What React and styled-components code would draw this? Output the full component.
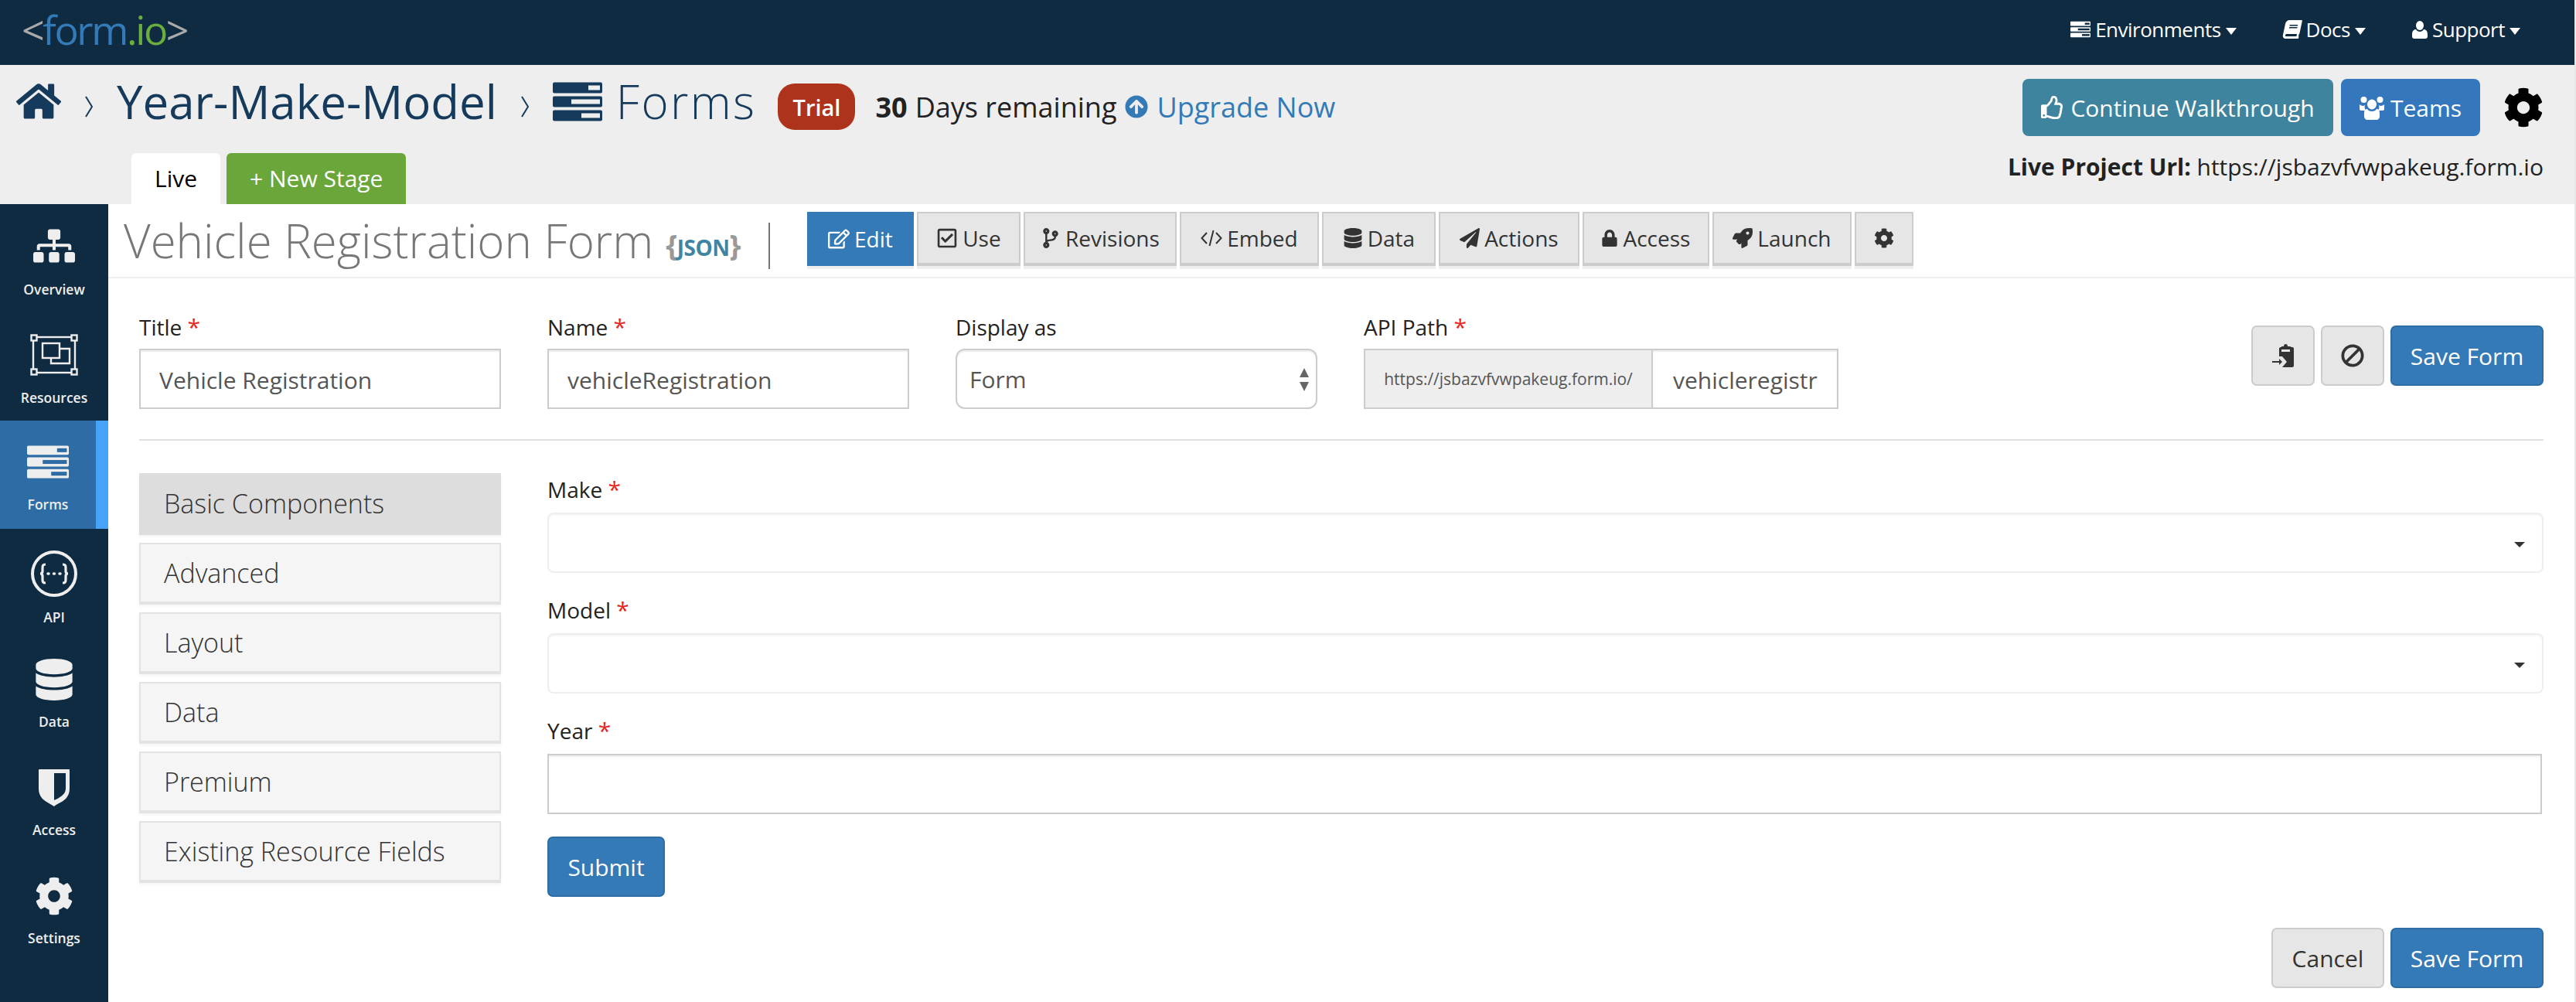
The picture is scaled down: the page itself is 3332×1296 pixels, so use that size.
import React from 'react';
import styled, { createGlobalStyle } from 'styled-components';
import {
  FaHome, FaRegThumbsUp, FaCog, FaRegEdit, FaRegCheckSquare, FaCodeBranch,
  FaDatabase, FaPaperPlane, FaLock, FaRocket, FaBook, FaBan, FaArrowCircleUp,
  FaSitemap,
} from 'react-icons/fa';

const GlobalStyle = createGlobalStyle`
  html, body { margin: 0; padding: 0; height: 100%; overflow: hidden; background: #e8e8e8; }
  body { font-family: "Open Sans", "Liberation Sans", sans-serif; font-size: 28px; color: #333; }
  * { box-sizing: border-box; }
`;

const Page = styled.div`
  width: 3330px;
  height: 1296px;
  background: #fff;
  display: flex;
  flex-direction: column;
  overflow: hidden;
`;

/* top navbar */
const TopNav = styled.nav`
  height: 84px;
  flex: none;
  background: #0f2b42;
  display: flex;
  align-items: center;
  justify-content: space-between;
  padding: 0 70px 8px 28px;
`;

const Logo = styled.div`
  font-size: 52px;
  font-weight: 400;
  line-height: 60px;
  letter-spacing: -2.4px;
  color: #aaa;
  span { color: #337ab7; }
  b { color: #6aae3d; font-weight: 400; }
`;

const NavLinks = styled.div`
  display: flex;
  gap: 60px;
`;

const NavLink = styled.a`
  display: flex;
  align-items: center;
  gap: 6px;
  color: #fff;
  font-size: 26px;
  letter-spacing: -0.5px;
  svg { flex: none; }
`;

const BookGlyph = styled(FaBook)`
  transform: skewX(-12deg);
`;

const NavCaret = styled.i`
  width: 0;
  height: 0;
  margin: 4px 0 0 0;
  border-left: 7px solid transparent;
  border-right: 7px solid transparent;
  border-top: 9px solid #fff;
`;

/* grey project header */
const Header = styled.header`
  height: 180px;
  flex: none;
  background: #eee;
  padding-right: 40px;
  display: flex;
  flex-direction: column;
`;

const HeaderTop = styled.div`
  height: 114px;
  display: flex;
  justify-content: space-between;
  padding-left: 21px;
`;

const Crumbs = styled.div`
  height: 94px;
  display: flex;
  align-items: center;
  color: #153a5b;
`;

const Crumb = styled.span`
  font-size: 60px;
  font-weight: ${(p) => (p.$light ? 300 : 400)};
  letter-spacing: ${(p) => (p.$light ? '2.4px' : '0')};
  margin-left: ${(p) => (p.$light ? '18px' : '0')};
  line-height: 70px;
`;

const CrumbSep = styled.svg`
  width: 14px;
  height: 28px;
  margin: 14px 29px 0 29px;
  fill: none;
  stroke: #153a5b;
  stroke-width: 2;
`;

const TrialBadge = styled.span`
  margin: 14px 0 0 28px;
  width: 100px;
  height: 60px;
  border-radius: 22px;
  background: #ad331d;
  color: #fff;
  font-size: 29px;
  font-weight: 600;
  display: flex;
  align-items: center;
  justify-content: center;
`;

const Remaining = styled.div`
  margin: 14px 0 0 26px;
  display: flex;
  align-items: center;
  font-size: 36px;
  color: #222;
  b { font-weight: 700; margin-right: 10px; }
`;

const Upgrade = styled.a`
  display: flex;
  align-items: center;
  gap: 11px;
  margin-left: 11px;
  color: #337ab7;
`;

const HeaderActions = styled.div`
  padding-top: 18px;
  display: flex;
  align-items: flex-start;
  gap: 10px;
`;

const HeadButton = styled.button`
  height: 74px;
  width: ${(p) => p.$w}px;
  border: 0;
  border-radius: 8px;
  background: ${(p) => p.$bg};
  color: #fff;
  font: 400 30px "Open Sans", sans-serif;
  padding: 0;
  display: flex;
  align-items: center;
  justify-content: center;
  gap: 8px;
`;

const HeadGear = styled.span`
  margin: 11px 0 0 20px;
  color: #000;
  display: flex;
`;

const HeaderBottom = styled.div`
  flex: 1;
  display: flex;
  justify-content: space-between;
  padding-left: 170px;
`;

const StageTabs = styled.div`
  display: flex;
  align-items: flex-end;
  gap: 8px;
`;

const StageTab = styled.a`
  height: 66px;
  padding: 0 30px 2px;
  border-radius: 6px 6px 0 0;
  background: ${(p) => (p.$add ? '#6aa639' : '#fff')};
  color: ${(p) => (p.$add ? '#fff' : '#000')};
  font-size: 30px;
  display: flex;
  align-items: center;
`;

const LiveUrl = styled.div`
  font-size: 30px;
  line-height: 36px;
  color: #222;
  b { font-weight: 700; }
`;

/* page body */
const Body = styled.div`
  flex: 1;
  display: flex;
  min-height: 0;
`;

const Sidebar = styled.aside`
  width: 140px;
  flex: none;
  background: #0f2b42;
  display: flex;
  flex-direction: column;
`;

const SideItem = styled.a`
  height: 140px;
  padding-top: ${(p) => p.$top || 30}px;
  background: ${(p) => (p.$active ? '#2d6ca5' : 'transparent')};
  border-right: ${(p) => (p.$active ? '16px solid #47a3f8' : '0')};
  display: flex;
  flex-direction: column;
  align-items: center;
  color: #eee;
  font-size: 17.5px;
  font-weight: 600;
  span { line-height: 24px; }
`;

const SideIcon = styled.div`
  height: ${(p) => p.$h}px;
  display: flex;
  align-items: center;
  justify-content: center;
  margin-bottom: ${(p) => p.$gap}px;
`;

const Main = styled.main`
  flex: 1;
  min-width: 0;
`;

const TitleBar = styled.div`
  height: 96px;
  border-bottom: 2px solid #eee;
  display: flex;
  padding-left: 20px;
`;

const FormTitle = styled.h1`
  margin: 4px 0 0;
  font-size: 60px;
  font-weight: 300;
  line-height: 86px;
  color: #777;
`;

const JsonTag = styled.span`
  margin: 9px 0 0 16px;
  font-size: 28px;
  font-weight: 700;
  line-height: 86px;
  color: #999;
  letter-spacing: -0.5px;
  i { font-style: normal; font-size: 38px; }
  em { font-style: normal; color: #3f84a0; }
`;

const TitleDivider = styled.i`
  width: 2px;
  height: 60px;
  margin: 24px 48px 0 36px;
  background: #777;
`;

const Toolbar = styled.div`
  padding-top: 10px;
  display: flex;
  gap: 4px;
`;

const ToolButton = styled.a`
  height: 70px;
  width: ${(p) => p.$w}px;
  border: 2px solid ${(p) => (p.$active ? '#337ab7' : '#ccc')};
  border-bottom-width: ${(p) => (p.$active ? 2 : 4)}px;
  background: ${(p) => (p.$active ? '#337ab7' : '#e6e6e6')};
  color: ${(p) => (p.$active ? '#fff' : '#333')};
  box-shadow: 0 4px 0 #eee;
  font-size: 28px;
  display: flex;
  align-items: center;
  justify-content: center;
  gap: 6px;
`;

const Content = styled.div`
  padding: 43px 40px 0;
`;

const SettingsRow = styled.div`
  display: flex;
  gap: 60px;
`;

const Field = styled.div`
  width: ${(p) => p.$w}px;
  flex: none;
`;

const Label = styled.label`
  display: block;
  height: 40px;
  line-height: 40px;
  margin-bottom: 8px;
  font-size: 28px;
  color: #222;
  i { color: #e3261c; font-style: normal; font-size: 30px; }
`;

const TextInput = styled.input`
  display: block;
  width: 100%;
  height: 78px;
  border: 2px solid #ccc;
  box-shadow: inset 0 2px 2px rgba(0, 0, 0, 0.075);
  padding: 2px 24px 0;
  font: 400 30px "Open Sans", sans-serif;
  color: #555;
  background: #fff;
  outline: none;
`;

const DisplaySelect = styled.div`
  position: relative;
  height: 78px;
  border: 2px solid #ccc;
  border-radius: 12px;
  box-shadow: inset 0 2px 2px rgba(0, 0, 0, 0.075);
  padding: 0 16px;
  display: flex;
  align-items: center;
  font-size: 30px;
  color: #555;
  svg { position: absolute; right: 8px; top: 23px; }
`;

const InputGroup = styled.div`
  display: flex;
  height: 78px;
`;

const Addon = styled.span`
  width: 374px;
  flex: none;
  background: #eee;
  border: 2px solid #ccc;
  font-size: 21px;
  color: #555;
  display: flex;
  align-items: center;
  justify-content: center;
`;

const GroupInput = styled(TextInput)`
  flex: 1;
  min-width: 0;
  border-left: 0;
  padding-left: 26px;
  padding-right: 0;
`;

const SettingsActions = styled.div`
  margin: 18px 0 0 auto;
  display: flex;
  gap: 8px;
`;

const Button = styled.button`
  height: 78px;
  width: ${(p) => p.$w}px;
  border-radius: 7px;
  border: 2px solid ${(p) => (p.$primary ? '#2e6da4' : '#ccc')};
  background: ${(p) => (p.$primary ? '#337ab7' : '#e6e6e6')};
  color: ${(p) => (p.$primary ? '#fff' : '#333')};
  font: 400 30px "Open Sans", sans-serif;
  padding: 0;
  display: flex;
  align-items: center;
  justify-content: center;
`;

const BanGlyph = styled(FaBan)`
  transform: scaleX(-1);
`;

const Rule = styled.hr`
  margin: 39px 0 42px;
  border: 0;
  height: 2px;
  background: #e0e0e0;
`;

const Builder = styled.div`
  display: flex;
  gap: 60px;
`;

const GroupList = styled.div`
  width: 468px;
  flex: none;
  display: flex;
  flex-direction: column;
  gap: 10px;
`;

const GroupItem = styled.a`
  height: 80px;
  padding: 0 30px;
  border: 2px solid ${(p) => (p.$active ? '#ddd' : '#e3e3e3')};
  border-bottom-width: 4px;
  background: ${(p) => (p.$active ? '#ddd' : '#f5f5f5')};
  box-shadow: 0 2px 4px rgba(0, 0, 0, 0.05);
  font-size: 34px;
  font-weight: 300;
  color: #333;
  display: flex;
  align-items: center;
`;

const Canvas = styled.div`
  flex: 1;
  min-width: 0;
  padding-top: 1px;
`;

const CanvasField = styled.div`
  margin-bottom: 28px;
  &:last-of-type { margin-bottom: 29px; }
`;

const CanvasLabel = styled(Label)`
  margin-bottom: 10px;
`;

const ChoiceBox = styled.div`
  position: relative;
  height: 78px;
  border: 2px solid #eee;
  border-radius: 8px;
  box-shadow: inset 0 2px 2px rgba(0, 0, 0, 0.04);
  &::after {
    content: '';
    position: absolute;
    right: 22px;
    top: 36px;
    border-left: 7px solid transparent;
    border-right: 7px solid transparent;
    border-top: 7px solid #333;
  }
`;

const YearInput = styled(TextInput)`
  width: calc(100% - 2px);
`;

const FormFooter = styled.div`
  margin-top: 40px;
  display: flex;
  justify-content: flex-end;
  gap: 8px;
`;

/* drawn icons */
function StackIcon({ w, h, color, cut }) {
  return (
    <svg width={w} height={h} viewBox="0 0 64 50">
      <rect x="0" y="0" width="64" height="14" rx="2" fill={color} />
      <rect x="0" y="18" width="64" height="14" rx="2" fill={color} />
      <rect x="0" y="36" width="64" height="14" rx="2" fill={color} />
      <rect x="46" y="4" width="15" height="6" fill={cut} />
      <rect x="24" y="22" width="37" height="6" fill={cut} />
      <rect x="37" y="40" width="24" height="6" fill={cut} />
    </svg>
  );
}

function ResourcesIcon() {
  return (
    <svg width="62" height="54" viewBox="0 0 62 54" fill="none" stroke="#eee" strokeWidth="2.4">
      <rect x="4" y="4" width="54" height="46" />
      <rect x="1.5" y="1.5" width="7" height="7" fill="#0f2b42" />
      <rect x="53.5" y="1.5" width="7" height="7" fill="#0f2b42" />
      <rect x="1.5" y="45.5" width="7" height="7" fill="#0f2b42" />
      <rect x="53.5" y="45.5" width="7" height="7" fill="#0f2b42" />
      <rect x="16" y="12" width="22" height="19" />
      <path d="M38 19h13v19H27v-7" />
    </svg>
  );
}

function ApiIcon() {
  return (
    <svg width="60" height="60" viewBox="0 0 60 60" fill="none" stroke="#eee">
      <ellipse cx="30" cy="30" rx="28" ry="28" strokeWidth="4" />
      <path
        d="M19 18c-4 0-4 2-4 5v4c0 2-1 3-3 3 2 0 3 1 3 3v4c0 3 0 5 4 5M41 18c4 0 4 2 4 5v4c0 2 1 3 3 3-2 0-3 1-3 3v4c0 3 0 5-4 5"
        strokeWidth="3.2"
      />
      <path d="M22 30h1M29.500 30h1M37 30h1" strokeWidth="3.5" strokeLinecap="round" />
    </svg>
  );
}

function ShieldIcon() {
  return (
    <svg width="40" height="48" viewBox="0 0 40 48">
      <path
        fill="#eee"
        d="M1 0h38c1 0 1 1 1 1v24c0 9-5 14-10 17-4 2-8 4-10 6-3-2-7-4-10-6C5 39 0 34 0 25V1c0-1 1-1 1-1zM20 5v35c3-1 6-3 9-5 4-3 6-6 6-10V5z"
        fillRule="evenodd"
      />
    </svg>
  );
}

function PasteIcon() {
  return (
    <svg width="28" height="30" viewBox="0 0 28 30" fill="#333">
      <path d="M12 3h3c0-2 1-3 2.500-3S20 1 20 3h3l2 1h1c1.500 0 2 1 2 2v22c0 1-1 2-2 2H13l6-7-6-7H9V6c0-1 1-2 2-2h1zm0 4v3h11V7z" fillRule="evenodd" />
      <path d="M0 22h9v-3l4 4-4 4v-3H0z" />
    </svg>
  );
}

function UpDownArrows() {
  return (
    <svg width="14" height="30" viewBox="0 0 14 30" fill="#666">
      <path d="M7 0l6 12H1zM7 30L1 18h12z" />
    </svg>
  );
}

function PersonIcon() {
  return (
    <svg width="20" height="23" viewBox="0 0 20 23" fill="#fff">
      <ellipse cx="10" cy="6" rx="5" ry="6" />
      <path d="M5 11c1 2 3 3 5 3s4-1 5-3c3 0 5 2 5 7v2c0 2-1 3-3 3H3c-2 0-3-1-3-3v-2c0-5 2-7 5-7z" />
    </svg>
  );
}

function UsersIcon() {
  return (
    <svg width="32" height="31" viewBox="0 0 32 31" fill="#fff">
      <circle cx="5.500" cy="5" r="4" />
      <circle cx="26.500" cy="5" r="4" />
      <path d="M0 11c1 1 3 2 5 2l2-1c-1 3 0 5 1 7H2c-1 0-2-1-2-2zM32 11c-1 1-3 2-5 2l-2-1c1 3 0 5-1 7h6c1 0 2-1 2-2z" />
      <ellipse cx="16" cy="11" rx="6" ry="6.500" />
      <path d="M10 17c1 2 3 3 6 3s5-1 6-3c3 0 4 2 4 6v4c0 2-2 4-4 4H10c-2 0-4-2-4-4v-4c0-4 1-6 4-6z" />
    </svg>
  );
}

function CodeIcon() {
  return (
    <svg width="28" height="22" viewBox="0 0 28 22" fill="none" stroke="#333" strokeWidth="2">
      <path d="M8 4L1.500 11 8 18M20 4l6.500 7L20 18M16.500 1l-5 20" />
    </svg>
  );
}

const toolItems = [
  { label: 'Edit', w: 138, icon: <FaRegEdit size={28} />, active: true },
  { label: 'Use', w: 134, icon: <FaRegCheckSquare size={28} /> },
  { label: 'Revisions', w: 198, icon: <FaCodeBranch size={26} /> },
  { label: 'Embed', w: 180, icon: <CodeIcon /> },
  { label: 'Data', w: 147, icon: <FaDatabase size={26} /> },
  { label: 'Actions', w: 182, icon: <FaPaperPlane size={26} /> },
  { label: 'Access', w: 164, icon: <FaLock size={22} /> },
  { label: 'Launch', w: 180, icon: <FaRocket size={26} /> },
  { label: '', w: 76, icon: <FaCog size={26} /> },
];

const groups = ['Basic Components', 'Advanced', 'Layout', 'Data', 'Premium', 'Existing Resource Fields'];

export default function App() {
  return (
    <Page>
      <GlobalStyle />
      <TopNav>
        <Logo>
          &lt;<span>form</span><b>.io</b>&gt;
        </Logo>
        <NavLinks>
          <NavLink>
            <StackIcon w={26} h={24} color="#fff" cut="#0f2b42" />
            Environments
            <NavCaret />
          </NavLink>
          <NavLink>
            <BookGlyph size={24} />
            Docs
            <NavCaret />
          </NavLink>
          <NavLink>
            <PersonIcon />
            Support
            <NavCaret />
          </NavLink>
        </NavLinks>
      </TopNav>

      <Header>
        <HeaderTop>
          <Crumbs>
            <FaHome size={58} />
            <CrumbSep viewBox="0 0 14 28"><path d="M3 1l8 13-8 13" /></CrumbSep>
            <Crumb>Year-Make-Model</Crumb>
            <CrumbSep viewBox="0 0 14 28"><path d="M3 1l8 13-8 13" /></CrumbSep>
            <StackIcon w={64} h={51} color="#153a5b" cut="#eee" />
            <Crumb $light>Forms</Crumb>
            <TrialBadge>Trial</TrialBadge>
            <Remaining>
              <b>30</b> Days remaining
              <Upgrade>
                <FaArrowCircleUp size={30} />
                Upgrade Now
              </Upgrade>
            </Remaining>
          </Crumbs>
          <HeaderActions>
            <HeadButton $bg="#3f849e" $w={402}>
              <FaRegThumbsUp size={30} />
              Continue Walkthrough
            </HeadButton>
            <HeadButton $bg="#3577bc" $w={180}>
              <UsersIcon />
              Teams
            </HeadButton>
            <HeadGear><FaCog size={52} /></HeadGear>
          </HeaderActions>
        </HeaderTop>
        <HeaderBottom>
          <StageTabs>
            <StageTab>Live</StageTab>
            <StageTab $add>+ New Stage</StageTab>
          </StageTabs>
          <LiveUrl><b>Live Project Url:</b> https://jsbazvfvwpakeug.form.io</LiveUrl>
        </HeaderBottom>
      </Header>

      <Body>
        <Sidebar>
          <SideItem>
            <SideIcon $h={48} $gap={20}><FaSitemap size={54} /></SideIcon>
            <span>Overview</span>
          </SideItem>
          <SideItem $top={28}>
            <SideIcon $h={54} $gap={16}><ResourcesIcon /></SideIcon>
            <span>Resources</span>
          </SideItem>
          <SideItem $active $top={30}>
            <SideIcon $h={46} $gap={20}><StackIcon w={54} h={43} color="#eee" cut="#2d6ca5" /></SideIcon>
            <span>Forms</span>
          </SideItem>
          <SideItem $top={28}>
            <SideIcon $h={60} $gap={14}><ApiIcon /></SideIcon>
            <span>API</span>
          </SideItem>
          <SideItem $top={27}>
            <SideIcon $h={56} $gap={14}><FaDatabase size={54} /></SideIcon>
            <span>Data</span>
          </SideItem>
          <SideItem $top={31}>
            <SideIcon $h={48} $gap={18}><ShieldIcon /></SideIcon>
            <span>Access</span>
          </SideItem>
          <SideItem $top={31}>
            <SideIcon $h={48} $gap={18}><FaCog size={50} /></SideIcon>
            <span>Settings</span>
          </SideItem>
        </Sidebar>

        <Main>
          <TitleBar>
            <FormTitle>Vehicle Registration Form</FormTitle>
            <JsonTag><i>{'{'}</i><em>JSON</em><i>{'}'}</i></JsonTag>
            <TitleDivider />
            <Toolbar>
              {toolItems.map((t) => (
                <ToolButton key={t.w + t.label} $w={t.w} $active={t.active}>
                  {t.icon}
                  {t.label}
                </ToolButton>
              ))}
            </Toolbar>
          </TitleBar>

          <Content>
            <SettingsRow>
              <Field $w={468}>
                <Label>Title <i>*</i></Label>
                <TextInput readOnly value="Vehicle Registration" />
              </Field>
              <Field $w={468}>
                <Label>Name <i>*</i></Label>
                <TextInput readOnly value="vehicleRegistration" />
              </Field>
              <Field $w={468}>
                <Label>Display as</Label>
                <DisplaySelect>Form<UpDownArrows /></DisplaySelect>
              </Field>
              <Field $w={614}>
                <Label>API Path <i>*</i></Label>
                <InputGroup>
                  <Addon>https://jsbazvfvwpakeug.form.io/</Addon>
                  <GroupInput readOnly value="vehicleregistr" />
                </InputGroup>
              </Field>
              <SettingsActions>
                <Button $w={82}><PasteIcon /></Button>
                <Button $w={82}><BanGlyph size={30} /></Button>
                <Button $w={198} $primary>Save Form</Button>
              </SettingsActions>
            </SettingsRow>

            <Rule />

            <Builder>
              <GroupList>
                {groups.map((g, i) => (
                  <GroupItem key={g} $active={i === 0}>{g}</GroupItem>
                ))}
              </GroupList>
              <Canvas>
                <CanvasField>
                  <CanvasLabel>Make <i>*</i></CanvasLabel>
                  <ChoiceBox />
                </CanvasField>
                <CanvasField>
                  <CanvasLabel>Model <i>*</i></CanvasLabel>
                  <ChoiceBox />
                </CanvasField>
                <CanvasField>
                  <CanvasLabel>Year <i>*</i></CanvasLabel>
                  <YearInput readOnly value="" />
                </CanvasField>
                <Button $w={152} $primary>Submit</Button>
              </Canvas>
            </Builder>

            <FormFooter>
              <Button $w={146}>Cancel</Button>
              <Button $w={198} $primary>Save Form</Button>
            </FormFooter>
          </Content>
        </Main>
      </Body>
    </Page>
  );
}
